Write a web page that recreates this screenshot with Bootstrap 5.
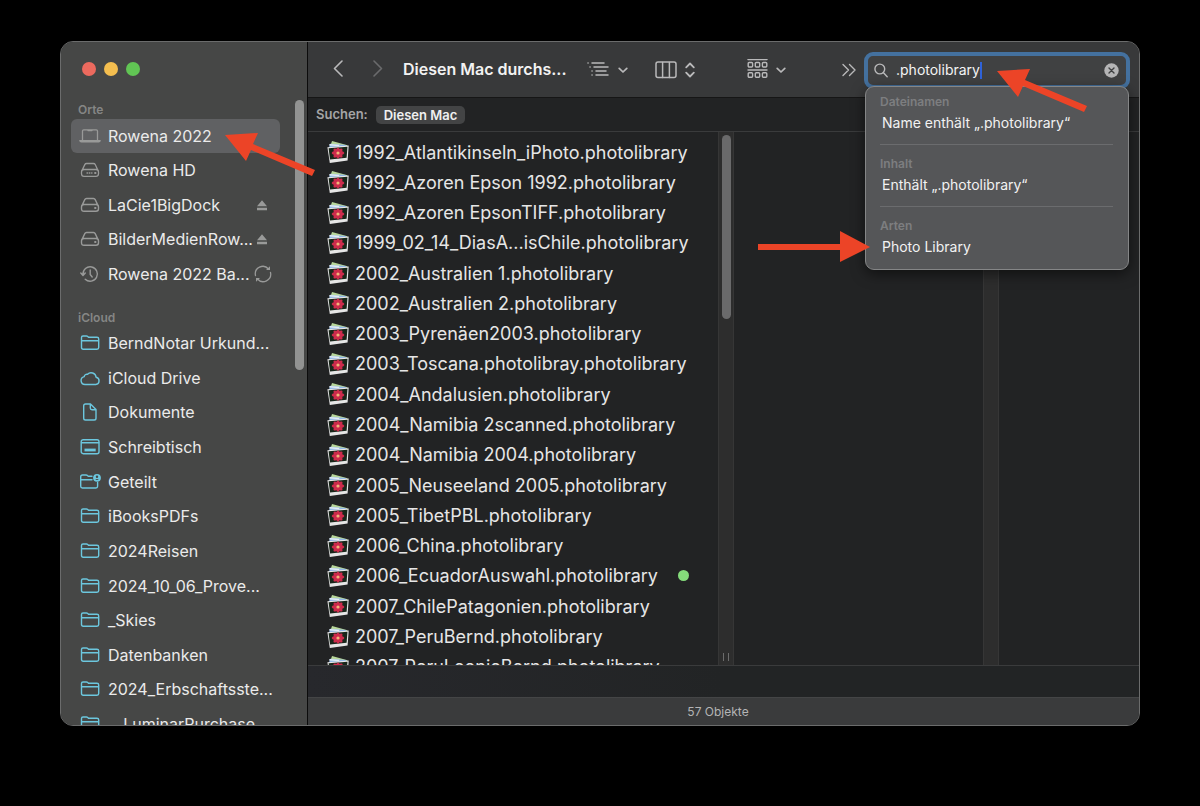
<!DOCTYPE html>
<html lang="de">
<head>
<meta charset="utf-8">
<meta name="viewport" content="width=device-width, initial-scale=1">
<title>Diesen Mac durchsuchen</title>
<link href="https://cdn.jsdelivr.net/npm/bootstrap@5.3.0/dist/css/bootstrap.min.css" rel="stylesheet">
<style>
  body { background: #000; color: #e6e6e6; font-family: Inter, "Liberation Sans", sans-serif; font-size: 16px; padding: 41px 60px 80px; }
  svg { display: block; flex: none; fill: none; stroke: currentColor; stroke-linecap: round; stroke-linejoin: round; }
  button { font: inherit; color: inherit; background: none; border: 0; padding: 0; }
  a { color: inherit; text-decoration: none; }
  .window { border: 1px solid #6b6c6c; border-radius: 13px; background: #222324; }
  .sidebar { width: 247px; background: #464746; border-right: 1px solid #0c0c0c; }
  .lights { padding: 20px 21px 0; gap: 8px; height: 58px; }
  .light { width: 14px; height: 14px; border-radius: 50%; }
  .places { padding: 0 27px 0 10px; margin-bottom: -16px; }
  .places-title { height: 18px; line-height: 20px; font-size: 12px; font-weight: 600; color: #858685; padding-left: 7px; }
  .places-title.later { margin-top: 16px; }
  .place { height: 34px; border-radius: 6px; padding: 0 8px 0 8px; color: #ebebeb; }
  .place.active { background: #606163; }
  .place svg { color: #6cc7de; }
  .place span { padding-left: 7px; }
  .place .gray, .place .tail { color: #999a99; }
  .place .tail { margin-left: auto; }
  .thumb { background: #929392; width: 9px; border-radius: 5px; }
  .thumb-side { top: 58px; right: 3px; height: 270px; }
  .toolbar { height: 56px; background: #38393a; border-bottom: 1px solid #161616; padding: 0 9px 0 24px; color: #b9b9ba; }
  .heading { font-size: 16px; font-weight: 600; color: #f2f2f2; margin: 0; width: 186px; padding: 0 0 2px 19px; line-height: 24px; }
  .tool-columns { margin-left: 27px; }
  .tool-grid { margin-left: 52px; }
  .search-wrap { width: 266px; }
  .search { height: 37px; border: 4px solid #44719f; border-radius: 9px; background: #404142; padding: 0 7px 0 6px; margin-top: 1px; }
  .search input { width: 84px; background: none; border: 0; outline: 0; padding: 0; color: #f4f4f4; font-size: 14px; line-height: 20px; }
  .caret { width: 2px; height: 17px; background: #2f62d9; }
  .suggest { top: 35px; left: 1px; right: 1px; z-index: 3; background: #555658; border: 1px solid #858687; border-radius: 9px; padding: 7px 14px 9px; box-shadow: 0 4px 14px #0008; }
  .suggest-title { font-size: 12px; line-height: 16px; font-weight: 600; color: #7d7e80; margin: 0; }
  .suggest a { display: block; font-size: 14px; line-height: 26px; color: #f2f2f2; padding-left: 2px; }
  .suggest hr { margin: 8px 1px 11px 0; border-color: #6b6c6e; opacity: 1; }
  .scope { height: 34px; padding: 0 10px 0 8px; border-bottom: 1px solid #3a3b3c; font-size: 13px; font-weight: 600; color: #a5a5a6; gap: 8px; }
  .scope-btn { background: #434445; border-radius: 5px; padding: 0 8px; height: 18px; line-height: 18px; color: #f0f0f0; }
  .save-btn { width: 60px; height: 12px; border-radius: 3px; background: #434445; }
  .files { width: 410px; }
  .file-list { padding: 5px 0 0 17px; margin-bottom: -17px; font-size: 18px; }
  .file { height: 30px; padding-left: 2px; gap: 6px; white-space: nowrap; }
  .file svg { stroke: none; }
  .tag { width: 11px; height: 11px; border-radius: 50%; background: #85dc7b; margin: 0 29px 0 auto; }
  .gutter { width: 16px; background: #2d2d2d; border: 1px solid #363636; border-width: 0 1px; }
  .gutter .thumb { background: #6a6a6b; height: 184px; top: 3px; left: 3px; }
  .grip { color: #6c6c6c; }
  .preview { flex: 0 0 249px; }
  .pathbar { height: 32px; border-top: 1px solid #3a3b3c; background: #25262a linear-gradient(90deg, #27282c, #222425 50%); }
  .status { height: 28px; background: #3a3b3c; border-top: 1px solid #444546; font-size: 12px; color: #b4b4b5; padding-right: 11px; }
  .arrow { fill: #ec4427; stroke: none; z-index: 5; pointer-events: none; }
</style>
</head>
<body class="vh-100 overflow-hidden">
<svg width="0" height="0" class="position-absolute" aria-hidden="true">
  <symbol id="folder" viewBox="0 0 20 18"><path d="M1.500 13.500V3.500q0-1.500 1.500-1.500h3.500q.7 0 1.200.5l.8.8h8.500q1.700 0 1.700 1.700v8.500q0 1.700-1.700 1.700H3.200q-1.700 0-1.700-1.700zM1.500 6.700h17.200"/></symbol>
  <symbol id="drive" viewBox="0 0 20 18"><path d="M1.500 10.500 4.800 3.600Q5.300 2.500 6.500 2.500h7q1.200 0 1.700 1.100l3.300 6.900M4 8.500h12q2.500 0 2.500 2.500v1.800q0 2.500-2.500 2.500H4q-2.500 0-2.500-2.500V11Q1.500 8.500 4 8.500z"/><path d="M15 12h.6" stroke-width="1.800"/></symbol>
  <symbol id="eject" viewBox="0 0 12 12"><path d="M6 1.200 11 7.300H1zM1 8.700h10v2.500H1z" fill="currentColor" stroke="none"/></symbol>
  <symbol id="down" viewBox="0 0 10 8"><path d="M1.200 2.300 5 6l3.800-3.700" stroke-width="1.700"/></symbol>
  <symbol id="photos" viewBox="0 0 22 24">
    <path d="M5 1 20.500 5.200 19 10 3 7z" fill="#b7d69a"/>
    <path d="M3 3.700 19 5 19 10 2 8z" fill="#8fb6e6"/>
    <path d="M2.500 3.900 12.500 4.800 12 6.300 2.200 5.600z" fill="#e4eef5"/>
    <path d="M.4 7.200 21.700 5.500 20.600 20.500 2.800 23z" fill="#e6e6e6"/>
    <path d="M1.600 8.200 20.500 6.700 19.600 17.800 3 19.500z" fill="#18261a"/>
    <g fill="#cc2c4c"><ellipse cx="11" cy="13" rx="6.300" ry="2.300"/><ellipse cx="11" cy="13" rx="6" ry="2.300" transform="rotate(45 11 13)"/><ellipse cx="11" cy="13" rx="5.600" ry="2.300" transform="rotate(90 11 13)"/><ellipse cx="11" cy="13" rx="6" ry="2.300" transform="rotate(135 11 13)"/></g>
    <circle cx="11" cy="13" r="1.600" fill="#f0b878"/>
  </symbol>
</svg>

<div class="window d-flex h-100 position-relative overflow-hidden">
  <nav class="sidebar d-flex flex-column flex-shrink-0 position-relative" aria-label="Seitenleiste">
    <div class="lights d-flex flex-shrink-0">
      <button class="light" style="background:#ec6a5e" aria-label="Schließen"></button>
      <button class="light" style="background:#f4be4f" aria-label="Minimieren"></button>
      <button class="light" style="background:#61c554" aria-label="Vergrößern"></button>
    </div>
    <div id="places" class="places d-flex flex-column flex-grow-1 justify-content-between">
      <div class="places-title">Orte</div>
      <a href="#" class="place active d-flex align-items-center"><svg class="gray" width="22" height="18" viewBox="0 0 22 18" stroke-width="1.300"><path d="M3.500 13V4q0-1.200 1.200-1.200h12.600q1.200 0 1.200 1.200v9M.8 13.600h20.400q-.3 1.200-1.500 1.200H2.300Q1.100 14.800.8 13.600zM9 3.500h4"/></svg><span>Rowena 2022</span></a>
      <a href="#" class="place d-flex align-items-center"><svg class="gray" width="22" height="18" viewBox="-1 0 22 18" stroke-width="1.300"><use href="#drive" width="20" height="18"/><path d="M7 12h5" stroke-dasharray=".6 1.700"/></svg><span>Rowena HD</span></a>
    </div>
    <span class="thumb thumb-side position-absolute"></span>
  </nav>

  <main class="d-flex flex-column flex-grow-1">
    <header class="toolbar d-flex align-items-center flex-shrink-0">
      <button aria-label="Zurück"><svg width="12" height="20" viewBox="0 1 12 20" stroke-width="1.600"><path d="M10 2 2.500 9.500 10 17"/></svg></button>
      <button class="ms-4 ps-1" style="color:#6a6b6c" aria-label="Vorwärts"><svg width="12" height="20" viewBox="0 1 12 20" stroke-width="1.600"><path d="M2 2 9.500 9.500 2 17"/></svg></button>
      <h1 class="heading text-nowrap">Diesen Mac durchs...</h1>
      <button class="d-flex align-items-center gap-2 ms-3" aria-label="Gruppieren"><svg width="24" height="18" viewBox="0 1 24 18" stroke-width="1.500"><path d="M6 3h12M8 7h14M10 11h10M10 15h12M2 3h.1M4 7h.1M6 11h.1M6 15h.1"/></svg><svg width="10" height="8"><use href="#down"/></svg></button>
      <button class="tool-columns d-flex align-items-center gap-2" aria-label="Darstellung"><svg width="22" height="18" viewBox="0 0 22 18" stroke-width="1.500"><rect x="1" y="1" width="20" height="15.500" rx="2"/><path d="M7.600 1.500v15M14.400 1.500v15"/></svg><svg width="10" height="18" viewBox="0 0 10 18" stroke-width="1.800"><path d="M1.200 6.300 5 2.500l3.800 3.800M1.200 11.700 5 15.500l3.800-3.800"/></svg></button>
      <button class="tool-grid d-flex align-items-center gap-2" aria-label="Objekte gruppieren"><svg width="21" height="22" viewBox="0 1 21 22" stroke-width="1.400"><path d="M1 1.500h19M1 12h19"/><g id="dots"><rect x="1.200" y="4.500" width="4.400" height="4.500" rx="1"/><rect x="8.300" y="4.500" width="4.400" height="4.500" rx="1"/><rect x="15.400" y="4.500" width="4.400" height="4.500" rx="1"/></g><use href="#dots" y="10.300"/></svg><svg width="10" height="8"><use href="#down"/></svg></button>
      <button class="ms-auto me-2" aria-label="Mehr"><svg width="14" height="14" viewBox="0 0 14 14" stroke-width="1.400"><path d="M1 1.500 6.500 7 1 12.500M7.500 1.500 13 7 7.500 12.500"/></svg></button>
      <div class="search-wrap position-relative">
        <div class="search d-flex align-items-center">
          <svg class="me-2" width="14" height="15" viewBox="0 0 14 15" stroke-width="1.400"><circle cx="5.800" cy="6" r="4.900"/><path d="m9.500 9.800 3.700 4"/></svg>
          <input type="text" value=".photolibrary" aria-label="Suchen">
          <span class="caret"></span>
          <button class="ms-auto" aria-label="Löschen"><svg width="15" height="15" viewBox="0 0 15 15" stroke-width="1.400"><circle cx="7.500" cy="7.500" r="7.200" fill="#b5b5b6" stroke="none"/><path d="m5 5 5 5M10 5l-5 5" stroke="#3f4041"/></svg></button>
        </div>
        <div class="suggest position-absolute">
          <h2 class="suggest-title">Dateinamen</h2>
          <a href="#">Name enthält „.photolibrary“</a>
          <hr>
          <h2 class="suggest-title">Inhalt</h2>
          <a href="#">Enthält „.photolibrary“</a>
          <hr>
          <h2 class="suggest-title">Arten</h2>
          <a href="#">Photo Library</a>
        </div>
        <svg class="arrow position-absolute" style="left:133px;top:18px" width="92" height="44" viewBox="0 0 92 44"><path d="M0 2 33 0 28 11 90 37 87 43 26 17 21 28z"/></svg>
        <svg class="arrow position-absolute" style="left:-106px;top:180px" width="112" height="32" viewBox="0 0 112 32"><path d="M0 13H82V0L112 16 82 31V19H0z"/></svg>
      </div>
    </header>
    <div class="scope d-flex align-items-center flex-shrink-0">
      <span>Suchen:</span><button class="scope-btn">Diesen Mac</button><button class="save-btn ms-auto" aria-label="Sichern"></button>
    </div>
    <div class="d-flex flex-grow-1 overflow-hidden" style="min-height:0">
      <div class="files d-flex flex-column flex-shrink-0"><div id="files" class="file-list d-flex flex-column flex-grow-1 justify-content-between"></div></div>
      <div class="gutter position-relative flex-shrink-0 d-flex align-items-end justify-content-center">
        <span class="thumb position-absolute"></span>
        <svg class="grip mb-1" width="8" height="8" viewBox="0 0 8 8"><path d="M1.500 0v8M6.500 0v8"/></svg>
      </div>
      <div class="preview"></div>
      <div class="gutter flex-shrink-0"></div>
    </div>
    <div class="pathbar flex-shrink-0"></div>
    <footer class="status d-flex align-items-center justify-content-center flex-shrink-0">57 Objekte</footer>
  </main>
  <svg class="arrow position-absolute" style="left:164px;top:91px" width="92" height="44" viewBox="0 0 92 44"><path d="M0 2 33 0 28 11 90 37 87 43 26 17 21 28z"/></svg>
</div>

<script>
  const icon = (inner, cls = "") => `<svg class="${cls}" width="22" height="18" viewBox="-1 0 22 18" stroke-width="1.400">${inner}</svg>`;
  const folder = icon('<use href="#folder" width="20" height="18"/>');
  const drive = icon('<use href="#drive" width="20" height="18"/>', "gray");
  const clock = icon('<path d="M3 9.500a7.200 7.200 0 1 1 2.200 4.700M.8 8l2.200 2.500L5.300 8M10.200 5v4.500l2 2.500"/>', "gray");
  const cloud = icon('<path d="M5 15.500a4 4 0 0 1-.8-7.900 2.700 2.700 0 0 1 3.300-2.300 5 5 0 0 1 8.600 2.900A3.700 3.700 0 0 1 15.800 15.500z"/>');
  const doc = icon('<path d="M5.500 1h5l5.500 5.500v8.700q0 1.800-1.800 1.800H5.500q-1.800 0-1.800-1.800V2.800Q3.700 1 5.500 1zM10.300 1.200V5q0 1.700 1.700 1.700h3.800"/>');
  const desk = icon('<rect x="1.200" y="1.700" width="17.800" height="14" rx="2"/><path d="M1.500 4.700h17.200"/><path d="M4.500 12h11.200" stroke-width="2.800" stroke-linecap="butt"/>');
  const shared = icon('<path d="M12 3.300H8.300l-1-.9q-.5-.4-1.100-.4H2.500Q.7 2 .7 3.800v9.500q0 1.700 1.700 1.700h13.500q1.700 0 1.700-1.700V9.500M.8 6.700H12"/><circle cx="17" cy="4.800" r="3.900" fill="currentColor" stroke="none"/><circle cx="17" cy="3.700" r="1.200" fill="#464746" stroke="none"/><path d="M15.200 7q1.800-2 3.600 0z" fill="#464746" stroke="none"/>');
  const eject = '<svg class="tail me-1" width="12" height="12"><use href="#eject"/></svg>';
  const sync = '<svg class="tail" width="18" height="18" viewBox="0 0 18 18" stroke-width="1.300"><path d="M1.500 10.500A7.500 7.500 0 0 1 14.500 4M16.500 7.500A7.500 7.500 0 0 1 3.500 14"/><path d="M12 5h4V1.300zM6 13H2v3.700z" fill="currentColor" stroke="none"/></svg>';
  const places = [
    [drive, "LaCie1BigDock", eject], [drive, "BilderMedienRow...", eject], [clock, "Rowena 2022 Ba...", sync],
    "iCloud",
    [folder, "BerndNotar Urkund..."], [cloud, "iCloud Drive"], [doc, "Dokumente"], [desk, "Schreibtisch"], [shared, "Geteilt"],
    [folder, "iBooksPDFs"], [folder, "2024Reisen"], [folder, "2024_10_06_Prove..."], [folder, "_Skies"], [folder, "Datenbanken"],
    [folder, "2024_Erbschaftsste..."], [folder, "__LuminarPurchase"]
  ];
  document.getElementById("places").insertAdjacentHTML("beforeend", places.map(p => typeof p === "string"
    ? `<div class="places-title later">${p}</div>`
    : `<a href="#" class="place d-flex align-items-center text-nowrap">${p[0]}<span>${p[1]}</span>${p[2] || ""}</a>`).join(""));

  const files = ["1992_Atlantikinseln_iPhoto", "1992_Azoren Epson 1992", "1992_Azoren EpsonTIFF", "1999_02_14_DiasA...isChile",
    "2002_Australien 1", "2002_Australien 2", "2003_Pyrenäen2003", "2003_Toscana.photolibray", "2004_Andalusien",
    "2004_Namibia 2scanned", "2004_Namibia 2004", "2005_Neuseeland 2005", "2005_TibetPBL", "2006_China",
    "2006_EcuadorAuswahl", "2007_ChilePatagonien", "2007_PeruBernd", "2007_PeruLeonieBernd"];
  document.getElementById("files").innerHTML = files.map(f =>
    `<div class="file d-flex align-items-center"><svg width="22" height="24"><use href="#photos"/></svg><span>${f}.photolibrary</span>${f === "2006_EcuadorAuswahl" ? '<span class="tag"></span>' : ""}</div>`).join("");
</script>
<script src="https://cdn.jsdelivr.net/npm/bootstrap@5.3.0/dist/js/bootstrap.bundle.min.js"></script>
</body>
</html>
